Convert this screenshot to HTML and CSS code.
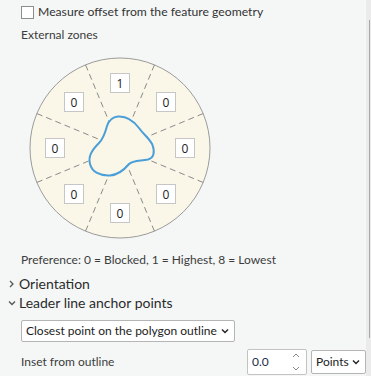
FILE: index.html
```html
<!DOCTYPE html>
<html lang="en">

<head>
    <meta charset="UTF-8">
    <title>Label placement</title>
    <link rel="stylesheet" href="styles.css">
</head>

<body>
    <div class="pane">
        <div class="content">
            <label class="check-row">
                <span class="check-box"></span>
                <span>Measure offset from the feature geometry</span>
            </label>

            <div class="caption zones-title">External zones</div>

            <svg class="zones" width="182" height="182" viewBox="29 56 182 182">
                <circle cx="120" cy="147" r="90" fill="#faf6e8" stroke="#9b9b9b" stroke-width="1" />
                <g stroke="#8a8a8a" stroke-width="1" stroke-dasharray="6 4">
                    <line x1="154.44" y1="63.85" x2="120" y2="147" />
                    <line x1="203.15" y1="112.56" x2="120" y2="147" />
                    <line x1="203.15" y1="181.44" x2="120" y2="147" />
                    <line x1="154.44" y1="230.15" x2="120" y2="147" />
                    <line x1="85.56" y1="230.15" x2="120" y2="147" />
                    <line x1="36.85" y1="181.44" x2="120" y2="147" />
                    <line x1="36.85" y1="112.56" x2="120" y2="147" />
                    <line x1="85.56" y1="63.85" x2="120" y2="147" />
                </g>
                <path d="M118 115.5 C126 115 133 119 139 127 C144 134 150 138 152.5 144 C155 151 154 157 148 158.5 C140 160 133 159 129 163 C124 169 117 174 110 174.5 C100 175 92 171 90 163 C88 155 92 149 99 142 C104 137 105 132 107 125 C109 119 113 116 118 115.5 Z"
                    fill="#faf6e8" stroke="#4a9fd8" stroke-width="2" />
                <g class="zone-box">
                    <rect x="110.5" y="72.5" width="19" height="19" />
                    <rect x="156.5" y="91.5" width="19" height="19" />
                    <rect x="175.5" y="137.5" width="19" height="19" />
                    <rect x="156.5" y="183.5" width="19" height="19" />
                    <rect x="110.5" y="202.5" width="19" height="19" />
                    <rect x="64.5" y="183.5" width="19" height="19" />
                    <rect x="45.5" y="137.5" width="19" height="19" />
                    <rect x="64.5" y="91.5" width="19" height="19" />
                </g>
                <g class="zone-num" text-anchor="middle">
                    <text x="120" y="86.5">1</text>
                    <text x="166" y="105.5">0</text>
                    <text x="185" y="151.5">0</text>
                    <text x="166" y="197.5">0</text>
                    <text x="120" y="216.5">0</text>
                    <text x="74" y="197.5">0</text>
                    <text x="55" y="151.5">0</text>
                    <text x="74" y="105.5">0</text>
                </g>
            </svg>

            <div class="caption pref">Preference: 0 = Blocked, 1 = Highest, 8 = Lowest</div>

            <div class="section first">
                <svg class="chev" width="10" height="10" viewBox="0 0 10 10">
                    <polyline points="3,2 6,5 3,8" fill="none" stroke="#555" stroke-width="1.3" />
                </svg>
                <span>Orientation</span>
            </div>
            <div class="section">
                <svg class="chev" width="10" height="10" viewBox="0 0 10 10">
                    <polyline points="2,3.5 5,6.5 8,3.5" fill="none" stroke="#555" stroke-width="1.3" />
                </svg>
                <span>Leader line anchor points</span>
            </div>

            <div class="select wide">
                <span>Closest point on the polygon outline</span>
                <svg width="8" height="6" viewBox="0 0 8 6">
                    <polyline points="1,1.5 4,4.5 7,1.5" fill="none" stroke="#222" stroke-width="1.4" />
                </svg>
            </div>

            <div class="inset-row">
                <span class="caption">Inset from outline</span>
                <div class="number">
                    <span>0.0</span>
                    <div class="spin">
                        <svg width="8" height="5" viewBox="0 0 8 5">
                            <polyline points="1,4 4,1 7,4" fill="none" stroke="#888" stroke-width="1" />
                        </svg>
                        <svg width="8" height="5" viewBox="0 0 8 5">
                            <polyline points="1,1 4,4 7,1" fill="none" stroke="#888" stroke-width="1" />
                        </svg>
                    </div>
                </div>
                <div class="select units">
                    <span>Points</span>
                    <svg width="8" height="6" viewBox="0 0 8 6">
                        <polyline points="1,1.5 4,4.5 7,1.5" fill="none" stroke="#222" stroke-width="1.4" />
                    </svg>
                </div>
            </div>
        </div>

        <div class="scroll-track">
            <div class="scroll-thumb"></div>
        </div>
    </div>
</body>

</html>
```

FILE: styles.css
```css
* {
    box-sizing: border-box;
}

body {
    margin: 0;
    background-color: #f5f7f7;
    font-family: Lato, "Open Sans", sans-serif;
    font-size: 12px;
    line-height: 16px;
    color: #333;
}

.pane {
    display: flex;
    width: 371px;
    height: 376px;
    overflow: hidden;
}

.content {
    flex: 1;
    padding: 4px 0 0 21px;
    white-space: nowrap;
}

.check-row {
    display: flex;
    align-items: center;
    gap: 4px;
    height: 16px;
    font-size: 12.2px;
    color: #333;
}

.check-box {
    width: 13px;
    height: 13px;
    margin-top: 1px;
    border: 1px solid #8d8d8d;
    background-color: #fff;
}

.caption {
    color: #3c3c3c;
}

.zones-title {
    margin-top: 7px;
}

.zones {
    display: block;
    margin: 14px 0 0 8px;
}

.zone-box rect {
    fill: #fff;
    stroke: #c6c6c6;
    stroke-width: 1;
}

.zone-num text {
    font-family: "Open Sans", sans-serif;
    font-size: 12px;
    fill: #222;
}

.pref {
    margin-top: 13px;
}

.section {
    display: flex;
    align-items: center;
    gap: 2px;
    margin-left: -14px;
    height: 19px;
    font-size: 14px;
    color: #2b2b2b;
}

.section.first {
    margin-top: 6px;
}

.select {
    display: flex;
    align-items: center;
    justify-content: space-between;
    background-color: #fff;
    border: 1px solid #b5b5b5;
    border-radius: 2px;
    color: #222;
}

.wide {
    width: 214px;
    height: 22px;
    margin-top: 8px;
    padding: 0 5px 0 4px;
}

.inset-row {
    display: flex;
    align-items: center;
    margin-top: 7px;
}

.inset-row .caption {
    flex: 1;
}

.number {
    display: flex;
    align-items: center;
    justify-content: space-between;
    width: 60px;
    height: 26px;
    padding: 0 6px 0 4px;
    background-color: #fff;
    border: 1px solid #c3c3c3;
    border-radius: 2px;
    color: #1c2b4a;
}

.spin {
    display: flex;
    flex-direction: column;
    gap: 8px;
}

.spin svg {
    display: block;
}

.units {
    width: 55px;
    height: 24px;
    margin: 0 0 0 4px;
    padding: 0 5px 0 4px;
}

.scroll-track {
    width: 5px;
    height: 376px;
    padding-top: 20px;
    background-color: #ebebeb;
}

.scroll-thumb {
    width: 1px;
    height: 318px;
    margin-left: 3px;
    background-color: #a9a9a9;
}
```
